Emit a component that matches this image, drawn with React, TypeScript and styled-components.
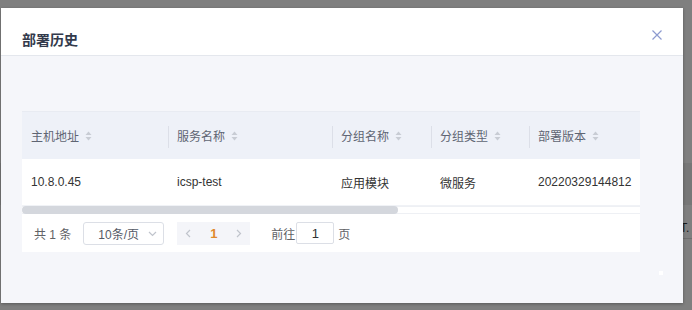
import React from "react";
import styled, { createGlobalStyle } from "styled-components";

const Global = createGlobalStyle`
  html, body { margin: 0; padding: 0; }
  body {
    font-family: "Liberation Sans", "Noto Sans CJK SC", sans-serif;
    background: #fff;
  }
`;

const Page = styled.div`
  position: relative;
  width: 692px;
  height: 310px;
  overflow: hidden;
  background: #ffffff;
`;

const BgContent = styled.div`
  display: flex;
  flex-direction: column;
  align-items: flex-end;
  padding-top: 163px;
`;

const BgBand = styled.div`
  align-self: stretch;
  height: 42px;
  background: #eeeeee;
`;

const BgRow = styled.div`
  height: 34px;
  width: 12px;
  display: flex;
  align-items: center;
  border-bottom: 1px solid #dddddd;
  font-size: 12px;
  color: #333;
  padding-top: 12px;
  box-sizing: border-box;
`;

const Mask = styled.div`
  position: absolute;
  inset: 0;
  background: rgba(0, 0, 0, 0.5);
  display: flex;
  align-items: flex-start;
  padding: 8px 0 0 1px;
`;

const Modal = styled.div`
  width: 682px;
  height: 295px;
  background: #f5f6fa;
  display: flex;
  flex-direction: column;
  box-shadow: 0 1px 3px rgba(0, 0, 0, 0.3);
`;

const Header = styled.div`
  height: 48px;
  box-sizing: border-box;
  background: #ffffff;
  border-bottom: 1px solid #e4e7ed;
  display: flex;
  justify-content: space-between;
  align-items: flex-start;
  padding: 19px 20px 0 21px;
`;

const Title = styled.div`
  font-size: 14px;
  line-height: 24px;
  font-weight: bold;
  color: #333a4c;
  font-family: "Noto Sans CJK SC", sans-serif;
`;

const Close = styled.button`
  border: none;
  background: none;
  padding: 0;
  margin-top: 2px;
  width: 12px;
  height: 12px;
  display: flex;
  color: #8d9bd0;
  cursor: pointer;
`;

const Body = styled.div`
  flex: 1;
  position: relative;
  padding: 55px 0 0 21px;
`;

const Card = styled.div`
  width: 618px;
  background: #ffffff;
  display: flex;
  flex-direction: column;
`;

const Viewport = styled.div`
  overflow: hidden;
  width: 618px;
`;

const Grid = styled.div`
  display: grid;
  grid-template-columns: 146px 164px 99px 98px 500px;
  width: 1007px;
`;

const HeadCell = styled.div<{ $divider?: boolean }>`
  height: 48px;
  background: #eef1f8;
  display: flex;
  align-items: center;
  padding-left: 9px;
  position: relative;
  font-size: 12px;
  color: #5f6573;
  border-top: 1px solid #e8ebf2;
  box-sizing: border-box;
  &::before {
    content: "";
    display: ${(p) => (p.$divider ? "block" : "none")};
    position: absolute;
    left: 0;
    top: 14px;
    height: 22px;
    width: 1px;
    background: #dcdfe8;
  }
`;

const Cell = styled.div`
  height: 47px;
  display: flex;
  align-items: center;
  padding-left: 9px;
  font-size: 12px;
  color: #333;
  border-bottom: 1px solid #f0f2f6;
  box-sizing: border-box;
  white-space: nowrap;
`;

const SortIcon = styled.svg`
  margin-left: 6px;
  width: 7px;
  height: 10px;
  fill: #c8ccd4;
`;

const ScrollTrack = styled.div`
  height: 8px;
  width: 618px;
  box-shadow: inset 0 1px 0 #eef0f4, inset 0 -1px 0 #eef0f4;
  display: flex;
`;

const ScrollThumb = styled.div`
  width: 376px;
  height: 8px;
  background: #d4d7dd;
  border-radius: 4px;
`;

const Pager = styled.div`
  height: 38px;
  display: flex;
  align-items: center;
  padding-left: 12px;
  font-size: 12px;
  color: #606266;
`;

const Total = styled.span`
  margin-right: 12px;
`;

const SizeSelect = styled.div`
  width: 81px;
  height: 23px;
  box-sizing: border-box;
  border: 1px solid #dcdfe6;
  border-radius: 3px;
  display: flex;
  align-items: center;
  justify-content: space-between;
  padding: 0 6px 0 14px;
  color: #555a66;
  margin-right: 13px;
`;

const Chevron = styled.svg`
  width: 9px;
  height: 9px;
  stroke: #c0c4cc;
  fill: none;
  stroke-width: 1.2;
`;

const PageGroup = styled.div`
  width: 73px;
  height: 23px;
  background: #f4f5f9;
  display: flex;
  align-items: center;
  justify-content: space-between;
  padding: 0 7px;
  box-sizing: border-box;
  margin-right: 21px;
`;

const Current = styled.span`
  color: #e08a2c;
  font-weight: bold;
  font-size: 13px;
`;

const JumpInput = styled.div`
  width: 38px;
  height: 22px;
  box-sizing: border-box;
  border: 1px solid #dcdfe6;
  border-radius: 2px;
  display: flex;
  align-items: center;
  justify-content: center;
  margin: 0 4px 0 1px;
  color: #333;
  font-size: 13px;
`;

const Dot = styled.div`
  position: absolute;
  left: 658px;
  top: 215px;
  width: 4px;
  height: 4px;
  background: #ffffff;
`;

const Sort = () => (
  <SortIcon viewBox="0 0 7 10">
    <path d="M3.5 0.5 L6.5 4 L0.5 4 Z" />
    <path d="M3.5 9.5 L6.5 6 L0.5 6 Z" />
  </SortIcon>
);

const Left = () => (
  <Chevron viewBox="0 0 9 9">
    <path d="M6 1 L2.5 4.5 L6 8" />
  </Chevron>
);
const Right = () => (
  <Chevron viewBox="0 0 9 9">
    <path d="M3 1 L6.5 4.5 L3 8" />
  </Chevron>
);
const Down = () => (
  <Chevron viewBox="0 0 9 9">
    <path d="M1 3 L4.5 6.5 L8 3" />
  </Chevron>
);

const columns = ["主机地址", "服务名称", "分组名称", "分组类型", "部署版本"];
const row = ["10.8.0.45", "icsp-test", "应用模块", "微服务", "20220329144812"];

export default function App() {
  return (
    <Page>
      <Global />
      <BgContent>
        <BgBand />
        <BgRow>T.</BgRow>
      </BgContent>
      <Mask>
        <Modal>
          <Header>
            <Title>部署历史</Title>
            <Close aria-label="close">
              <svg viewBox="0 0 12 12" width="12" height="12" stroke="currentColor" strokeWidth="1.2" fill="none">
                <path d="M1.5 1.5 L10.5 10.5 M10.5 1.5 L1.5 10.5" />
              </svg>
            </Close>
          </Header>
          <Body>
            <Card>
              <Viewport>
                <Grid>
                  {columns.map((c, i) => (
                    <HeadCell key={c} $divider={i > 0}>
                      {c}
                      <Sort />
                    </HeadCell>
                  ))}
                  {row.map((v, i) => (
                    <Cell key={i}>{v}</Cell>
                  ))}
                </Grid>
              </Viewport>
              <ScrollTrack>
                <ScrollThumb />
              </ScrollTrack>
              <Pager>
                <Total>共 1 条</Total>
                <SizeSelect>
                  <span>10条/页</span>
                  <Down />
                </SizeSelect>
                <PageGroup>
                  <Left />
                  <Current>1</Current>
                  <Right />
                </PageGroup>
                <span>前往</span>
                <JumpInput>1</JumpInput>
                <span>页</span>
              </Pager>
            </Card>
            <Dot />
          </Body>
        </Modal>
      </Mask>
    </Page>
  );
}
